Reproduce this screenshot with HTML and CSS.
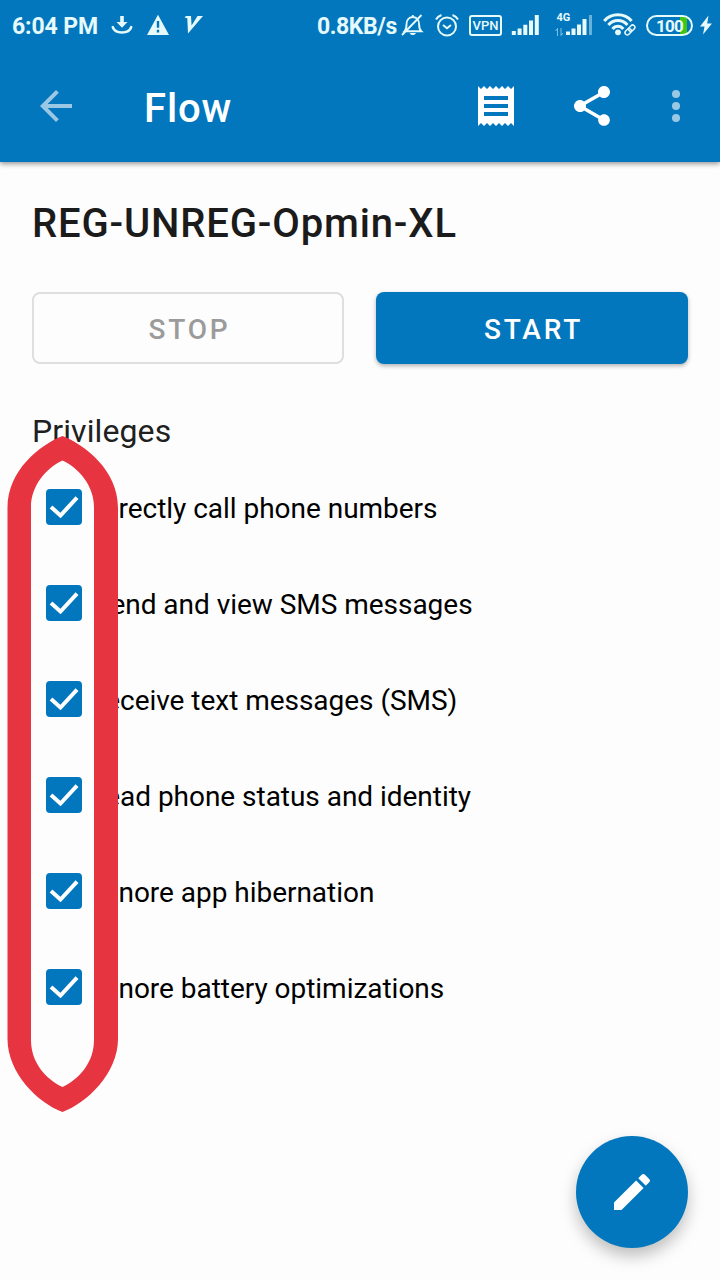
FILE: index.html
```html
<!DOCTYPE html>
<html lang="en">
<head>
<meta charset="utf-8">
<title>Flow</title>
<link rel="stylesheet" href="styles.css">
</head>
<body>
<div class="screen">
  <header class="top">
    <div class="status">
      <span class="clock">6:04 PM</span>
      <svg class="s-download" width="22" height="20" viewBox="0 0 22 20"><path d="M9.2 1h3.600v6h3.700L11 12.700 5.500 7h3.700z" fill="currentColor"/><path d="M1.800 12.200C4 19.300 18 19.300 20.200 12.200" fill="none" stroke="currentColor" stroke-width="2.600" stroke-linecap="round"/></svg>
      <svg class="s-warn" width="24" height="22" viewBox="0 0 24 22"><path d="M12 .8 23 21H1z" fill="currentColor"/><path d="M12 7v6.800M12 15.800v2.600" stroke="#0277bd" stroke-width="2.400"/></svg>
      <svg class="s-v" width="20" height="20" viewBox="0 0 20 20"><path d="M.5 2.500 2 1h5l.6 9.500L13.500 1H19L4 18.500 3.300 3.200z" fill="currentColor"/></svg>
      <span class="speed">0.8KB/s</span>
      <svg class="s-bell" width="24" height="24" viewBox="0 0 24 24" fill="none" stroke="currentColor" stroke-width="1.900"><path d="M3.500 18.300c2-2 2-3.500 2-6.800 0-4 2-7.500 6.300-7.500s6.300 3.500 6.300 7.500c0 3.300 0 4.800 2.200 6.800zM11.800 4V2M1 22 20.500 2"/><path d="M8.700 20h6.200c-1 2.700-5.200 2.700-6.200 0z" fill="currentColor" stroke="none"/></svg>
      <svg class="s-alarm" width="24" height="24" viewBox="0 0 24 24" fill="none" stroke="currentColor" stroke-width="2"><circle cx="12" cy="13.500" r="9"/><path d="M1 6.500Q2.500 3.500 6.500 2M23 6.500Q21.500 3.500 17.500 2M8 12l4 3.300 4-3.300"/></svg>
      <span class="vpn">VPN</span>
      <svg class="s-signal" width="29" height="22" viewBox="0 0 29 22" stroke="currentColor" stroke-width="4"><path d="M2.800 21v-4M8.600 21v-6.500M14.300 21V10.800M20 21V6.500M25.800 21V1"/></svg>
      <svg class="s-signal4" width="38" height="26" viewBox="0 0 38 26"><g stroke="currentColor" stroke-width="4"><path d="M13 24v-3.500M18.500 24v-6.500M24 24V13.500M29.500 24V8"/><path d="M35.500 24V4" opacity=".45" stroke-width="3"/></g><path d="M2.500 25v-7.500L.5 20M6 17v7.500L8 22" fill="none" stroke="currentColor" opacity=".55"/><text class="net" x="1.500" y="9.500">4G</text></svg>
      <svg class="s-wifi" width="33" height="24" viewBox="0 0 33 24" fill="none" stroke="currentColor" stroke-width="3"><path d="M1.200 8C8-.2 21.800-.2 28.600 8M5.400 12c5-6 14-6 19 0M9.500 16c3-3.700 8-3.700 10.800 0"/><circle cx="15" cy="19.300" r="2.900" fill="currentColor" stroke="none"/><g stroke-width="1.500" transform="rotate(-45 27 17)"><rect x="21" y="14.700" width="7" height="4.500" rx="2.200"/><rect x="26" y="14.700" width="7" height="4.500" rx="2.200"/></g></svg>
      <span class="battery">100</span>
      <svg class="s-bolt" width="14" height="20" viewBox="0 0 14 20"><path d="M9.500.5 1 11.500h4.500L4 19.500 13 8.500H8.200z" fill="currentColor"/></svg>
    </div>
    <div class="toolbar">
      <svg class="icon faded" viewBox="0 0 24 24"><path d="M20 11H7.830l5.590-5.590L12 4l-8 8 8 8 1.410-1.410L7.830 13H20v-2z"/></svg>
      <h1 class="title">Flow</h1>
      <svg class="icon" viewBox="0 0 24 24"><path d="M18 17H6v-2h12v2zm0-4H6v-2h12v2zm0-4H6V7h12v2zM3 22l1.500-1.500L6 22l1.500-1.500L9 22l1.500-1.500L12 22l1.500-1.500L15 22l1.500-1.500L18 22l1.500-1.500L21 22V2l-1.500 1.500L18 2l-1.500 1.500L15 2l-1.500 1.500L12 2l-1.500 1.500L9 2 7.500 3.500 6 2 4.500 3.500 3 2v20z"/></svg>
      <svg class="icon share" viewBox="0 0 24 24"><path d="M18 16.080c-.76 0-1.440.3-1.960.77L8.910 12.700c.05-.23.09-.46.09-.7s-.04-.47-.09-.7l7.050-4.110c.54.5 1.250.81 2.040.81 1.660 0 3-1.340 3-3s-1.340-3-3-3-3 1.340-3 3c0 .24.040.47.090.7L8.040 9.810C7.500 9.310 6.790 9 6 9c-1.660 0-3 1.340-3 3s1.340 3 3 3c.79 0 1.500-.31 2.040-.81l7.120 4.160c-.05.21-.08.43-.08.650 0 1.610 1.310 2.920 2.920 2.920s2.920-1.310 2.920-2.920-1.310-2.920-2.920-2.920z"/></svg>
      <svg class="icon more faded" viewBox="0 0 24 24"><circle cx="12" cy="6" r="2"/><circle cx="12" cy="12" r="2"/><circle cx="12" cy="18" r="2"/></svg>
    </div>
  </header>
  <main class="content">
    <h2 class="flow-name">REG-UNREG-Opmin-XL</h2>
    <div class="actions">
      <button class="btn stop" disabled>STOP</button>
      <button class="btn start">START</button>
    </div>
    <h3 class="section">Privileges</h3>
    <ul class="list">
      <li class="row"><span class="check"><svg viewBox="0 0 36 36"><path d="m5 18 9.500 8.500L31 8.700"/></svg></span><span class="label">directly call phone numbers</span></li>
      <li class="row"><span class="check"><svg viewBox="0 0 36 36"><path d="m5 18 9.500 8.500L31 8.700"/></svg></span><span class="label">send and view SMS messages</span></li>
      <li class="row"><span class="check"><svg viewBox="0 0 36 36"><path d="m5 18 9.500 8.500L31 8.700"/></svg></span><span class="label">receive text messages (SMS)</span></li>
      <li class="row"><span class="check"><svg viewBox="0 0 36 36"><path d="m5 18 9.500 8.500L31 8.700"/></svg></span><span class="label">read phone status and identity</span></li>
      <li class="row"><span class="check"><svg viewBox="0 0 36 36"><path d="m5 18 9.500 8.500L31 8.700"/></svg></span><span class="label">ignore app hibernation</span></li>
      <li class="row"><span class="check"><svg viewBox="0 0 36 36"><path d="m5 18 9.500 8.500L31 8.700"/></svg></span><span class="label">ignore battery optimizations</span></li>
    </ul>
  </main>
  <svg class="marker" width="112" height="678" viewBox="0 0 112 678"><path fill-rule="evenodd" d="M55.500 1C78 10 111 35 111 73V604C111 638 80 668 55.500 677 31 668 .5 638 .5 604V73C.5 35 33 10 55.500 1zM55.500 25.500C39 33 24 51 24 72V605C24 628 39 644 55.500 652 72 644 87 628 87 605V72C87 51 72 33 55.500 25.500z"/></svg>
  <button class="fab" aria-label="Edit"><svg class="icon" viewBox="0 0 24 24"><path d="M3 17.250V21h3.750L17.810 9.940l-3.750-3.750L3 17.250zM20.710 7.040a1 1 0 0 0 0-1.410l-2.340-2.340a1 1 0 0 0-1.410 0l-1.830 1.830 3.750 3.750 1.830-1.830z"/></svg></button>
</div>
</body>
</html>
```
FILE: styles.css
```css
* { box-sizing: border-box; }
body { margin: 0; background: #fdfdfd; font-family: Roboto, "Liberation Sans", sans-serif; }
svg { display: block; flex: none; }
.screen { position: relative; width: 720px; height: 1280px; overflow: hidden; }
.top { height: 162px; background: #0277bd; color: #fff; box-shadow: 0 2px 5px rgba(0, 0, 0, .4); }

.status { display: flex; align-items: center; height: 50px; padding-left: 12px; color: #e6f9fb; font-weight: 500; white-space: nowrap; }
.clock { width: 99px; font-size: 23px; line-height: 28px; padding-top: 3px; font-weight: 700; letter-spacing: -.1px; }
.s-warn { margin-left: 13px; }
.s-v { margin-left: 14px; }
.speed { width: 83px; margin-left: 113px; font-size: 23px; line-height: 28px; padding-top: 3px; font-weight: 700; letter-spacing: -.4px; }
.s-bell { margin-left: 1px; }
.s-alarm { margin-left: 10px; }
.vpn { width: 33px; height: 21px; margin-left: 10px; border: 2px solid; border-radius: 3px; font-size: 13px; line-height: 18px; text-align: center; }
.s-signal { margin-left: 9px; }
.s-signal4 { margin-left: 15px; margin-top: -3px; }
.net { font-size: 11px; font-weight: 700; fill: currentColor; }
.s-wifi { margin-left: 10px; }
.battery { width: 47px; height: 21px; margin-left: 10px; border: 2px solid; border-radius: 11px; font-size: 17px; font-weight: 700; letter-spacing: -.8px; line-height: 18px; text-align: center; background: linear-gradient(90deg, transparent 32px, #40c515 32px 39px, transparent 39px); }
.s-bolt { margin-left: 6px; }

.toolbar { display: flex; align-items: center; height: 112px; padding-left: 32px; }
.icon { width: 48px; height: 48px; fill: currentColor; }
.faded { opacity: .6; }
.title { width: 328px; margin: 6px 0 0 64px; font-size: 40px; line-height: 48px; font-weight: 500; letter-spacing: .9px; }
.share { margin-left: 48px; }
.more { margin-left: 36px; }

.content { padding: 38px 32px 0; }
.flow-name { margin: 0; color: #1b1b1b; font-size: 40px; line-height: 48px; font-weight: 500; letter-spacing: .85px; white-space: nowrap; }
.actions { display: grid; grid-template-columns: 1fr 1fr; gap: 32px; margin-top: 44px; }
.btn { height: 72px; padding: 4px 0 0 3px; border: 0; border-radius: 8px; font: 500 28px/32px Roboto, sans-serif; letter-spacing: 2.8px; }
.stop { border: 2px solid #dfdfdf; background: transparent; color: #9b9b9b; }
.start { background: #0277bd; color: #fff; box-shadow: 0 2px 4px rgba(0, 0, 0, .3); }
.section { margin: 48px 0 0; color: #202020; font-size: 32px; line-height: 38px; font-weight: 400; letter-spacing: .1px; }
.list { margin: 9px 0 0; padding: 0; list-style: none; }
.row { display: flex; align-items: center; height: 96px; color: #000; font-size: 28px; white-space: nowrap; }
.label { padding-top: 2px; letter-spacing: -.03px; }
.check { width: 36px; height: 36px; margin: 0 14px; border-radius: 4px; background: #0277bd; }
.check path { fill: none; stroke: #fff; stroke-width: 4; }

.marker { position: absolute; left: 7px; top: 435px; fill: #e63440; }
.fab { position: absolute; left: 576px; top: 1136px; display: flex; align-items: center; justify-content: center; width: 112px; height: 112px; padding: 0; border: 0; border-radius: 50%; background: #0277bd; color: #fff; box-shadow: 0 8px 16px rgba(0, 0, 0, .25); }
```
